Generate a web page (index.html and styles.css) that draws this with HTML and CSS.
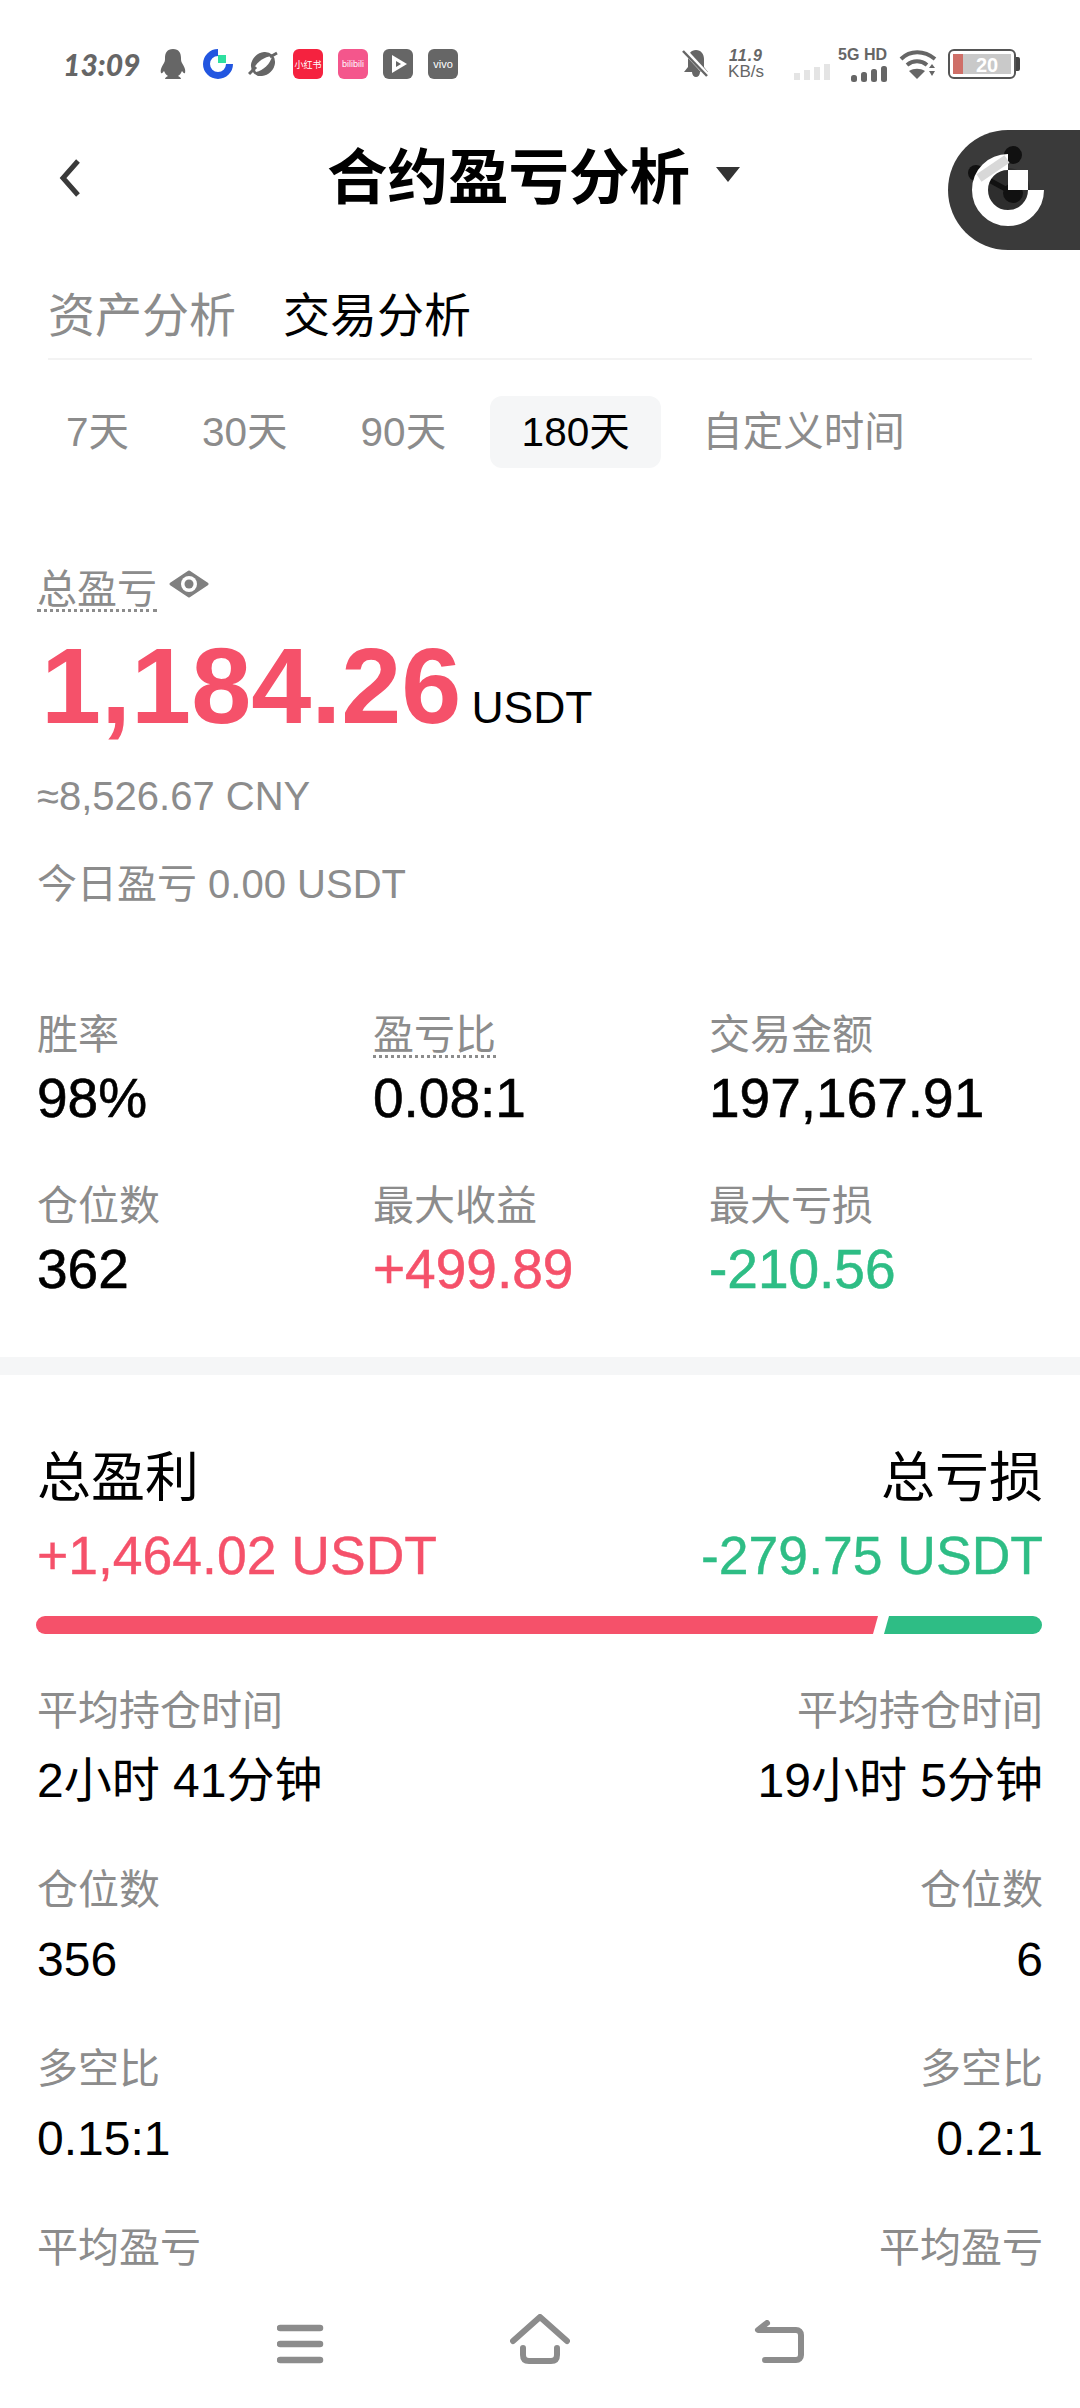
FILE: index.html
```html
<!DOCTYPE html>
<html lang="zh-CN">
<head>
    <meta charset="UTF-8">
    <title>合约盈亏分析</title>
    <link rel="stylesheet" href="styles.css">
</head>
<body>
<div class="screen">
    <div class="status-bar">
        <span class="time">13:09</span>
        <div class="status-apps">
            <svg class="app" viewBox="0 0 30 30"><path d="M15 0c-6 0-8 4-8 9 0 2 0 3-1 5-2 3-4 7-3 10 1 1 2-1 3-2 1 2 2 4 4 5-2 1-3 2-3 3h16c0-1-1-2-3-3 2-1 3-3 4-5 1 1 2 3 3 2 1-3-1-7-3-10-1-2-1-3-1-5 0-5-2-9-8-9z" fill="#666"/></svg>
            <svg class="app" viewBox="0 0 30 30"><path d="M15 3.500A11.500 11.500 0 1 0 26.500 15" fill="none" stroke="#2256e0" stroke-width="7"/><path d="M15 6h8v8h-8z" fill="#2fe0a0"/></svg>
            <svg class="app" viewBox="0 0 30 30"><ellipse cx="15" cy="15" rx="11" ry="13" transform="rotate(45 15 15)" fill="#666"/><path d="M6 19C10 12 16 8 24 7 23 14 15 22 8 23z" fill="#fff"/><path d="M1 25 8 18M22 8l7-4" stroke="#666" stroke-width="3"/></svg>
            <span class="app tile tile-red">小红书</span>
            <span class="app tile tile-pink">bilibili</span>
            <svg class="app" viewBox="0 0 30 30"><rect width="30" height="30" rx="6" fill="#666"/><path d="M9 6l15 9-15 9z" fill="#fff"/><path d="M13 12l5 3-5 3z" fill="#666"/></svg>
            <span class="app tile tile-gray">vivo</span>
        </div>
        <div class="status-right">
            <svg class="bell" viewBox="0 0 28 32"><path d="M14 2c-5 0-8 4-8 9v8l-4 5h8c0 3 2 5 4 5s4-2 4-5h8l-4-5v-8c0-5-3-9-8-9z" fill="#666"/><path d="M2 2l24 26" stroke="#fff" stroke-width="5"/><path d="M1 3l24 25" stroke="#666" stroke-width="2.500"/></svg>
            <div class="speed"><span class="speed-num">11.9</span><span>KB/s</span></div>
            <svg class="signal signal-off" viewBox="0 0 36 16"><rect x="0" y="9" width="6" height="7"/><rect x="10" y="6" width="6" height="10"/><rect x="20" y="3" width="6" height="13"/><rect x="30" y="0" width="6" height="16"/></svg>
            <div class="network">
                <span class="network-name">5G HD</span>
                <svg class="signal" viewBox="0 0 36 16"><rect x="0" y="9" width="6" height="7" rx="2.500"/><rect x="10" y="6" width="6" height="10" rx="2.500"/><rect x="20" y="3" width="6" height="13" rx="2.500"/><rect x="30" y="0" width="6" height="16" rx="2.500"/></svg>
            </div>
            <svg class="wifi" viewBox="0 0 38 30"><g fill="none" stroke="#666" stroke-width="4"><path d="M2 10C11 1 25 1 36 10"/><path d="M8 16c6-5 14-5 20 0"/></g><path d="M10 22c5-3 11-3 16 0l-8 8z" fill="#666"/><path d="M30 19l3-4 3 4zM30 22h6l-3 5z" fill="#666"/></svg>
            <div class="battery"><div class="battery-body"><span class="battery-red"></span><span class="battery-num">20</span></div><span class="battery-tip"></span></div>
        </div>
    </div>

    <div class="header">
        <svg class="back" viewBox="0 0 24 40"><path d="M20 3 5 20l15 17" fill="none" stroke="#3a3a3a" stroke-width="5"/></svg>
        <h1 class="title">合约盈亏分析</h1>
        <span class="caret"></span>
    </div>

    <div class="float-btn">
        <svg viewBox="0 0 132 120" class="float-logo">
            <circle cx="60" cy="60" r="22" fill="#2e2e2e"/>
            <path d="M28 43 65 63" stroke="#111" stroke-width="5"/>
            <circle cx="65" cy="25" r="9" fill="#111"/>
            <circle cx="28" cy="43" r="8" fill="#111"/>
            <circle cx="65" cy="63" r="10" fill="#111"/>
            <path d="M88 60A28 28 0 1 1 60 32" fill="none" stroke="#fff" stroke-width="16"/>
            <path d="M59 29 31 48" stroke="#d8d8d8" stroke-width="9"/>
            <rect x="60" y="40" width="20" height="20" fill="#fff"/>
        </svg>
    </div>

    <div class="tabs">
        <span class="tab">资产分析</span>
        <span class="tab tab-on">交易分析</span>
    </div>

    <div class="periods">
        <span class="period">7天</span>
        <span class="period">30天</span>
        <span class="period">90天</span>
        <span class="period period-on">180天</span>
        <span class="period">自定义时间</span>
    </div>

    <div class="summary">
        <div class="total-label">
            <span class="dotted">总盈亏</span>
            <svg class="eye" viewBox="0 0 40 28"><path d="M20 2 38 14 20 26 2 14z" fill="#808080" stroke="#808080" stroke-width="3" stroke-linejoin="round"/><circle cx="20" cy="14" r="8" fill="#fff"/><circle cx="20" cy="14" r="4.500" fill="#808080"/></svg>
        </div>
        <div class="total-row"><span class="total-num">1,184.26</span><span class="total-unit">USDT</span></div>
        <div class="total-cny">≈8,526.67 CNY</div>
        <div class="today">今日盈亏 0.00 USDT</div>
    </div>

    <div class="stats">
        <div class="stat"><span class="label">胜率</span><span class="value">98%</span></div>
        <div class="stat"><span class="label"><span class="dotted">盈亏比</span></span><span class="value">0.08:1</span></div>
        <div class="stat"><span class="label">交易金额</span><span class="value">197,167.91</span></div>
        <div class="stat"><span class="label">仓位数</span><span class="value">362</span></div>
        <div class="stat"><span class="label">最大收益</span><span class="value red">+499.89</span></div>
        <div class="stat"><span class="label">最大亏损</span><span class="value green">-210.56</span></div>
    </div>

    <div class="band"></div>

    <div class="compare">
        <div class="compare-row"><span class="compare-head">总盈利</span><span class="compare-head">总亏损</span></div>
        <div class="compare-row"><span class="compare-sum red">+1,464.02 USDT</span><span class="compare-sum green">-279.75 USDT</span></div>
        <div class="bar"><span class="bar-red"></span><span class="bar-green"></span></div>

        <div class="compare-row row-label"><span class="label">平均持仓时间</span><span class="label">平均持仓时间</span></div>
        <div class="compare-row row-value"><span class="detail">2小时 41分钟</span><span class="detail">19小时 5分钟</span></div>
        <div class="compare-row row-label"><span class="label">仓位数</span><span class="label">仓位数</span></div>
        <div class="compare-row row-value"><span class="detail">356</span><span class="detail">6</span></div>
        <div class="compare-row row-label"><span class="label">多空比</span><span class="label">多空比</span></div>
        <div class="compare-row row-value"><span class="detail">0.15:1</span><span class="detail">0.2:1</span></div>
        <div class="compare-row row-label"><span class="label">平均盈亏</span><span class="label">平均盈亏</span></div>
    </div>

    <div class="nav">
        <svg class="nav-icon" viewBox="0 0 48 40"><path d="M3 4h40M3 20h40M3 36h40" fill="none" stroke="#8c8c8c" stroke-width="6.500" stroke-linecap="round"/></svg>
        <svg class="nav-icon" viewBox="0 0 60 50"><path d="M3 27 30 3l27 24M13 34v7c0 4 2 6 6 6h22c4 0 6-2 6-6v-7" fill="none" stroke="#8c8c8c" stroke-width="6" stroke-linecap="round" stroke-linejoin="round"/></svg>
        <svg class="nav-icon" viewBox="0 0 52 44"><path d="M13 3 4 10h38c3 0 5 2 5 5v20c0 3-2 5-5 5H11" fill="none" stroke="#8c8c8c" stroke-width="6" stroke-linecap="round" stroke-linejoin="round"/></svg>
    </div>
</div>
</body>
</html>
```

FILE: styles.css
```css
* {
    box-sizing: border-box;
}
body {
    margin: 0;
    background: #fff;
    font-family: "Liberation Sans", "Noto Sans CJK SC", sans-serif;
    color: #000;
}
.screen {
    position: relative;
    width: 1080px;
    height: 2408px;
    overflow: hidden;
    background: #fff;
}

/* status bar */
.status-bar {
    display: flex;
    align-items: center;
    height: 128px;
    padding: 0 60px 0 63px;
}
.time {
    width: 95px;
    font-family: Lato, sans-serif;
    font-size: 30px;
    font-weight: 900;
    font-style: italic;
    color: #666;
}
.status-apps {
    display: flex;
    gap: 15px;
}
.app {
    display: block;
    width: 30px;
    height: 30px;
}
.tile {
    display: flex;
    align-items: center;
    justify-content: center;
    border-radius: 6px;
    color: #fff;
    font-size: 9px;
    white-space: nowrap;
    overflow: hidden;
}
.tile-red {
    background: #f5223f;
}
.tile-pink {
    background: #f4568c;
}
.tile-gray {
    background: #666;
    font-size: 11px;
}
.status-right {
    display: flex;
    align-items: center;
    margin-left: auto;
}
.bell {
    width: 28px;
    height: 32px;
}
.speed {
    display: flex;
    flex-direction: column;
    width: 40px;
    margin-left: 16px;
    font-size: 17px;
    line-height: 16px;
    color: #666;
    text-align: center;
    white-space: nowrap;
}
.speed-num {
    font-size: 16px;
    font-style: italic;
    font-weight: bold;
    letter-spacing: 1px;
}
.signal {
    display: block;
    width: 36px;
    height: 16px;
    fill: #666;
}
.signal-off {
    fill: #e4e4e4;
    margin: 16px 0 0 28px;
}
.network {
    display: flex;
    flex-direction: column;
    align-items: flex-end;
    width: 48px;
    margin-left: 9px;
}
.network-name {
    font-size: 16px;
    line-height: 17px;
    font-weight: bold;
    color: #666;
    white-space: nowrap;
    margin-bottom: 3px;
}
.wifi {
    width: 38px;
    height: 30px;
    margin-left: 12px;
}
.battery {
    display: flex;
    align-items: center;
    margin-left: 11px;
}
.battery-body {
    display: flex;
    align-items: center;
    width: 68px;
    height: 30px;
    padding: 3px;
    border: 2px solid #555;
    border-radius: 6px;
}
.battery-red {
    width: 10px;
    height: 100%;
    background: #cf6f68;
}
.battery-num {
    flex: 1;
    height: 100%;
    background: #c9c9c9;
    color: #fff;
    font-size: 20px;
    line-height: 22px;
    font-weight: bold;
    text-align: center;
}
.battery-tip {
    width: 4px;
    height: 14px;
    background: #444;
    border-radius: 0 2px 2px 0;
}

/* header */
.header {
    display: flex;
    align-items: center;
    height: 100px;
    padding-left: 58px;
}
.back {
    width: 24px;
    height: 40px;
}
.title {
    margin: 0 0 0 245px;
    font-size: 60.5px;
    line-height: 100px;
    font-weight: bold;
    white-space: nowrap;
}
.caret {
    width: 0;
    height: 0;
    margin: 0 0 8px 26px;
    border-left: 12px solid transparent;
    border-right: 12px solid transparent;
    border-top: 15px solid #333;
}
.float-btn {
    position: absolute;
    top: 130px;
    right: 0;
    width: 132px;
    height: 120px;
    background: #3a3a3a;
    border-radius: 60px 0 0 60px;
}
.float-logo {
    display: block;
    width: 132px;
    height: 120px;
}

/* tabs */
.tabs {
    display: flex;
    gap: 47px;
    height: 88px;
    margin: 44px 48px 0;
    border-bottom: 2px solid #f3f3f3;
}
.tab {
    font-size: 47px;
    line-height: 88px;
    color: #8c8c8c;
}
.tab-on {
    color: #000;
}
.periods {
    display: flex;
    align-items: center;
    height: 72px;
    margin: 36px 0 0 66px;
}
.period {
    margin-right: 73px;
    font-size: 40.5px;
    line-height: 72px;
    color: #8c8c8c;
}
.period-on {
    width: 171px;
    margin: 0 41px 0 -29px;
    background: #f5f6f7;
    border-radius: 12px;
    color: #000;
    text-align: center;
}

/* total */
.summary {
    padding: 98px 37px 0;
}
.total-label {
    display: flex;
    align-items: flex-start;
    height: 50px;
    font-size: 40px;
    line-height: 46px;
    color: #8c8c8c;
}
.dotted {
    display: inline-block;
    height: 46px;
    border-bottom: 3px dotted #8c8c8c;
}
.eye {
    width: 40px;
    height: 28px;
    margin: 4px 0 0 12px;
}
.total-row {
    display: flex;
    align-items: baseline;
    height: 112px;
    margin-top: 14px;
}
.total-num {
    margin-left: 4px;
    font-size: 108px;
    line-height: 112px;
    font-weight: bold;
    color: #f5516a;
}
.total-unit {
    margin-left: 10px;
    font-size: 44.5px;
}
.total-cny {
    margin-top: 32px;
    font-size: 40px;
    line-height: 44px;
    color: #8c8c8c;
}
.today {
    margin-top: 42px;
    font-size: 40px;
    line-height: 48px;
    color: #8c8c8c;
}

/* stats */
.stats {
    display: grid;
    grid-template-columns: 336px 336px 1fr;
    row-gap: 55px;
    padding: 104px 37px 0;
}
.stat {
    display: flex;
    flex-direction: column;
}
.label {
    height: 46px;
    font-size: 41px;
    line-height: 46px;
    color: #8c8c8c;
    white-space: nowrap;
}
.value {
    margin-top: 10px;
    font-size: 55px;
    line-height: 60px;
    white-space: nowrap;
    -webkit-text-stroke: 0.6px currentColor;
}
.red {
    color: #f5516a;
}
.green {
    color: #2ebd85;
}
.band {
    height: 18px;
    margin-top: 58px;
    background: #f5f6f7;
}

/* profit and loss */
.compare {
    padding: 71px 37px 0 37px;
}
.compare-row {
    display: flex;
    justify-content: space-between;
}
.compare-head {
    font-size: 54px;
    line-height: 64px;
}
.compare-sum {
    margin-top: 16px;
    font-size: 53.5px;
    line-height: 60px;
    -webkit-text-stroke: 0.4px currentColor;
}
.bar {
    display: flex;
    gap: 6px;
    height: 18px;
    margin: 30px 1px 0 -1px;
}
.bar-red {
    width: 842px;
    background: #f5516a;
    border-radius: 9px 0 0 9px;
    clip-path: polygon(0 0, 100% 0, calc(100% - 5px) 100%, 0 100%);
}
.bar-green {
    flex: 1;
    background: #2ebd85;
    border-radius: 0 9px 9px 0;
    clip-path: polygon(5px 0, 100% 0, 100% 100%, 0 100%);
}
.row-label {
    margin-top: 59px;
}
.row-value {
    margin-top: 20px;
}
.bar + .row-label {
    margin-top: 54px;
}
.detail {
    font-size: 48px;
    line-height: 54px;
    white-space: nowrap;
}

/* navigation */
.nav {
    position: absolute;
    left: 0;
    right: 0;
    bottom: 0;
    display: flex;
    justify-content: space-between;
    align-items: flex-end;
    height: 96px;
    padding: 0 274px 44px 277px;
    background: #fff;
}
.nav-icon {
    display: block;
    width: 48px;
    height: 40px;
}
.nav-icon:nth-child(2) {
    width: 60px;
    height: 50px;
}
.nav-icon:nth-child(3) {
    width: 52px;
    height: 44px;
}
```
